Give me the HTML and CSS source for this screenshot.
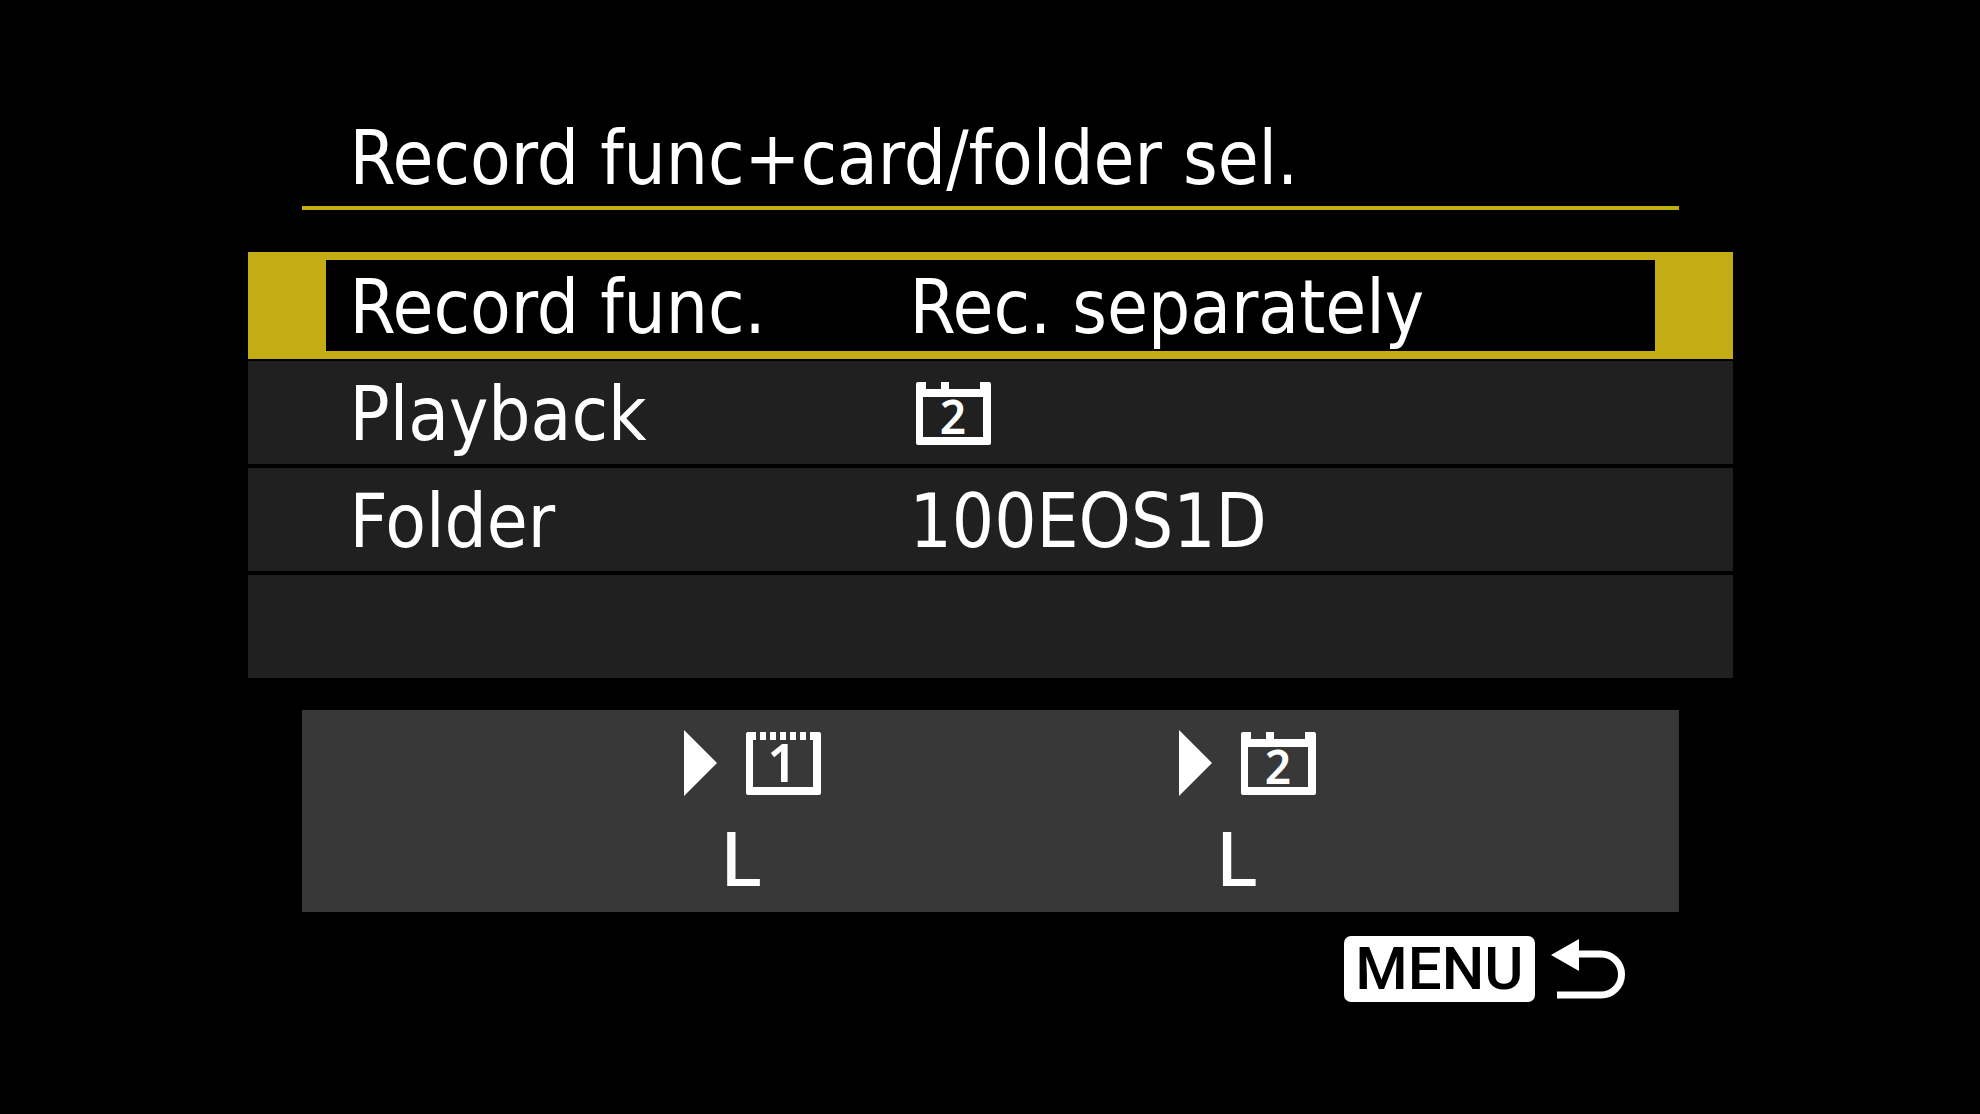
FILE: index.html
```
<!DOCTYPE html>
<html lang="en">
<head>
    <meta charset="UTF-8">
    <meta name="viewport" content="width=device-width, initial-scale=1.0">
    <title>Record func+card/folder sel.</title>
    <link rel="stylesheet" href="styles.css">
</head>
<body>

<main class="screen">
    <h1 class="title">Record func+card/folder sel.</h1>

    <!-- Settings list -->
    <ul class="settings">
        <li>
            <button type="button" class="row selected">
                <span>Record func.</span>
                <span>Rec. separately</span>
            </button>
        </li>
        <li>
            <button type="button" class="row">
                <span>Playback</span>
                <svg class="card" viewBox="0 0 75 63" role="img" aria-label="Card 2">
                    <path d="M2 0H10V7H25V0H33V7H64V0H73Q75 0 75 2V61Q75 63 73 63H2Q0 63 0 61V2Q0 0 2 0ZM7 15V55H67V15Z"/>
                    <text x="37" y="52" class="two">2</text>
                </svg>
            </button>
        </li>
        <li>
            <button type="button" class="row">
                <span>Folder</span>
                <span>100EOS1D</span>
            </button>
        </li>
        <li class="row"></li>
    </ul>

    <!-- Card status -->
    <section class="status">
        <div class="slot">
            <div class="target">
                <svg class="arrow" viewBox="0 0 33 66"><path d="M0 0L33 33L0 66Z"/></svg>
                <svg class="card" viewBox="0 0 75 63" role="img" aria-label="Card 1">
                    <path d="M2 0H10V8H7V55H67V8H64V0H73Q75 0 75 2V61Q75 63 73 63H2Q0 63 0 61V2Q0 0 2 0Z"/>
                    <path d="M14 0H20V8H14ZM24 0H30V8H24ZM34 0H40V8H34ZM44 0H50V8H44ZM54 0H60V8H54Z"/>
                    <text x="36" y="50" class="one">1</text>
                </svg>
            </div>
            <div class="quality">L</div>
        </div>
        <div class="slot">
            <div class="target">
                <svg class="arrow" viewBox="0 0 33 66"><path d="M0 0L33 33L0 66Z"/></svg>
                <svg class="card" viewBox="0 0 75 63" role="img" aria-label="Card 2">
                    <path d="M2 0H10V7H25V0H33V7H64V0H73Q75 0 75 2V61Q75 63 73 63H2Q0 63 0 61V2Q0 0 2 0ZM7 15V55H67V15Z"/>
                    <text x="37" y="52" class="two">2</text>
                </svg>
            </div>
            <div class="quality">L</div>
        </div>
    </section>

    <!-- Back button -->
    <footer class="footer">
        <button type="button" class="back">
            <span class="key">MENU</span>
            <svg class="return" viewBox="0 0 74 62" aria-hidden="true">
                <path d="M0 17L28 1V33Z"/>
                <path class="line" d="M26 16H50A20.5 20.5 0 0 1 50 57H6"/>
            </svg>
        </button>
    </footer>
</main>

</body>
</html>
```
FILE: styles.css
```
body {
    margin: 0;
    background-color: #000;
    color: #fff;
    font-family: "DejaVu Sans Condensed", "DejaVu Sans", sans-serif;
    font-size: 74px;
}

button {
    margin: 0;
    border: none;
    background: none;
    color: inherit;
    font: inherit;
    text-align: left;
    cursor: pointer;
}

svg {
    display: block;
    flex: none;
    fill: #fff;
    overflow: visible;
}

.screen {
    width: 75%;
    margin: 0 auto;
    padding-top: 118px;
}

.title {
    margin: 0 54px 42px;
    padding: 0 0 8px 48px;
    border-bottom: 4px solid #c4ac14;
    font-size: 74px;
    font-weight: normal;
    line-height: 80px;
    white-space: nowrap;
}

/* Settings list */
.settings {
    margin: 0 0 30px;
    padding: 0;
    list-style: none;
}

.row {
    display: grid;
    grid-template-columns: 560px 1fr;
    align-items: center;
    box-sizing: border-box;
    width: 100%;
    height: 107px;
    padding: 2px 0 0 102px;
    border: solid #000;
    border-width: 2px 0;
    background-color: #202020;
    line-height: 80px;
    white-space: nowrap;
}

.selected {
    padding-left: 24px;
    border-color: #c4ac14;
    border-width: 8px 78px;
    background-color: #000;
}

.card {
    width: 75px;
    height: 63px;
}

.row .card {
    margin-left: 6px;
}

.card text {
    font-family: "Noto Sans", sans-serif;
    font-weight: 600;
    text-anchor: middle;
}

.one {
    font-size: 52px;
}

.two {
    font-size: 46px;
}

/* Card status */
.status {
    display: grid;
    grid-template-columns: 36% 36%;
    justify-content: center;
    margin: 0 54px 24px;
    padding: 20px 0 8px;
    background-color: #383838;
}

.slot {
    display: flex;
    flex-direction: column;
    align-items: center;
    gap: 18px;
}

.target {
    display: flex;
    align-items: center;
    gap: 29px;
    padding-left: 20px;
}

.arrow {
    width: 33px;
    height: 66px;
}

.quality {
    font-family: Inter, sans-serif;
    font-size: 74px;
    font-weight: 500;
    line-height: 90px;
}

/* Back button */
.footer {
    display: flex;
    justify-content: flex-end;
    padding-right: 108px;
}

.back {
    display: flex;
    align-items: center;
    gap: 16px;
    padding: 0;
}

.key {
    padding: 0 11px;
    border-radius: 7px;
    background-color: #fff;
    color: #000;
    font-family: Roboto, sans-serif;
    font-size: 60px;
    font-weight: 500;
    line-height: 66px;
}

.return {
    width: 74px;
    height: 62px;
}

.line {
    fill: none;
    stroke: #fff;
    stroke-width: 7;
}
```
